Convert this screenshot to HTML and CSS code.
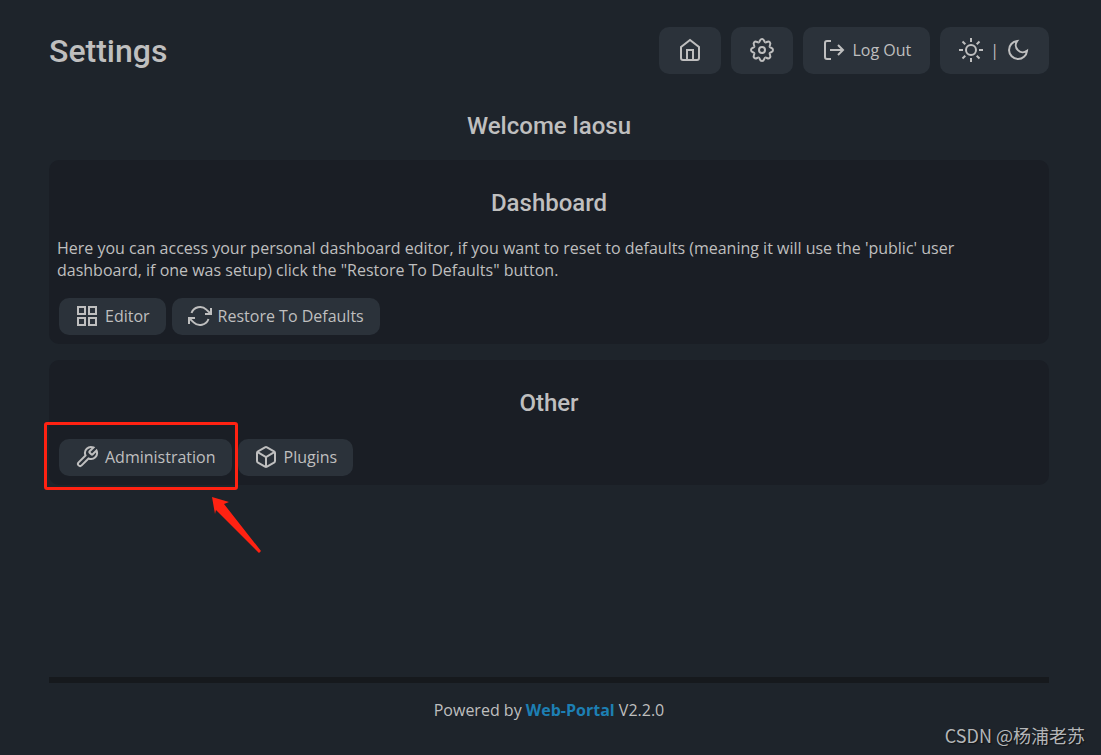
FILE: index.html
```html
<!DOCTYPE html>
<html lang="en">
<head>
<meta charset="utf-8">
<title>Settings</title>
<link rel="stylesheet" href="styles.css">
</head>
<body>
<div class="page">
  <header class="header">
    <h1 class="title">Settings</h1>
    <nav class="nav">
      <button class="nav-button" aria-label="Home">
        <svg class="icon" viewBox="0 0 24 24"><path d="M3 9l9-7 9 7v11a2 2 0 0 1-2 2H5a2 2 0 0 1-2-2z"/><path d="M9 22V12h6v10"/></svg>
      </button>
      <button class="nav-button" aria-label="Settings">
        <svg class="icon" viewBox="0 0 24 24">
          <circle cx="12" cy="12" r="3"/>
          <path id="tooth" d="M19.670 8.820C20.250 10.200 23 9.400 23 12S20.250 13.800 19.670 15.180"/>
          <use href="#tooth" transform="rotate(45 12 12)"/>
          <use href="#tooth" transform="rotate(90 12 12)"/>
          <use href="#tooth" transform="rotate(135 12 12)"/>
          <use href="#tooth" transform="rotate(180 12 12)"/>
          <use href="#tooth" transform="rotate(225 12 12)"/>
          <use href="#tooth" transform="rotate(270 12 12)"/>
          <use href="#tooth" transform="rotate(315 12 12)"/>
        </svg>
      </button>
      <button class="nav-button">
        <svg class="icon" viewBox="0 0 24 24"><path d="M9 3H5a2 2 0 0 0-2 2v14a2 2 0 0 0 2 2h4"/><path d="M8 12h13M16 7l5 5-5 5"/></svg>
        <span>Log Out</span>
      </button>
      <button class="nav-button theme" aria-label="Switch theme">
        <svg class="icon" viewBox="0 0 24 24"><circle cx="12" cy="12" r="5"/><path d="M12 0v4M12 20v4M0 12h4M20 12h4M3.500 3.500l2.800 2.800M17.700 17.700l2.800 2.800M3.500 20.500l2.800-2.800M17.700 6.300l2.800-2.800"/></svg>
        <span>|</span>
        <svg class="icon" viewBox="0 0 24 24"><path d="M21 12.800A9 9 0 1 1 11.200 3 7 7 0 0 0 21 12.800z"/></svg>
      </button>
    </nav>
  </header>
  <main class="main">
    <h2 class="heading">Welcome laosu</h2>
    <section class="panel">
      <h2 class="heading">Dashboard</h2>
      <p class="text">Here you can access your personal dashboard editor, if you want to reset to defaults (meaning it will use the 'public' user dashboard, if one was setup) click the "Restore To Defaults" button.</p>
      <div class="actions">
        <button class="action">
          <svg class="icon" viewBox="0 0 24 24"><path d="M3 3h7v7H3zM14 3h7v7h-7zM14 14h7v7h-7zM3 14h7v7H3z"/></svg>
          <span>Editor</span>
        </button>
        <button class="action">
          <svg class="icon" viewBox="0 0 24 24"><path d="M23 4v6h-6M1 20v-6h6"/><path d="M3.510 9a9 9 0 0 1 14.850-3.360L23 10M1 14l4.640 4.360A9 9 0 0 0 20.490 15"/></svg>
          <span>Restore To Defaults</span>
        </button>
      </div>
    </section>
    <section class="panel">
      <h2 class="heading">Other</h2>
      <div class="actions">
        <div class="marked">
          <button class="action">
            <svg class="icon" viewBox="0 0 24 24"><path d="M14.700 6.300a1 1 0 0 0 0 1.400l1.600 1.600a1 1 0 0 0 1.400 0l3.770-3.770a6 6 0 0 1-7.940 7.940l-6.910 6.910a2.120 2.120 0 0 1-3-3l6.910-6.910a6 6 0 0 1 7.940-7.940l-3.760 3.760z"/></svg>
            <span>Administration</span>
          </button>
          <div class="mark"></div>
          <svg class="arrow" viewBox="0 0 50 58"><path d="M1 1L18 6 13 8 50 55 48 57 5 14 4 18z"/></svg>
        </div>
        <button class="action">
          <svg class="icon" viewBox="0 0 24 24"><path d="M21 16V8a2 2 0 0 0-1-1.730l-7-4a2 2 0 0 0-2 0l-7 4A2 2 0 0 0 3 8v8a2 2 0 0 0 1 1.730l7 4a2 2 0 0 0 2 0l7-4A2 2 0 0 0 21 16z"/><path d="M3.270 6.960L12 12.010l8.730-5.050M12 22.080V12"/></svg>
          <span>Plugins</span>
        </button>
      </div>
    </section>
  </main>
  <footer class="footer">Powered by <a class="link" href="#">Web-Portal</a> V2.2.0</footer>
</div>
<div class="watermark">CSDN @杨浦老苏</div>
</body>
</html>
```

FILE: styles.css
```css
* { box-sizing: border-box; }
body {
  margin: 0;
  background: #1e242b;
  color: #bfbfbf;
  font: 16px/22px "Open Sans", "Noto Sans", sans-serif;
}
.page {
  display: flex;
  flex-direction: column;
  min-height: 100vh;
  padding: 27px 52px 34px 49px;
}
.header {
  display: flex;
  justify-content: space-between;
  align-items: center;
}
.title, .heading {
  margin: 0;
  font-family: Roboto, sans-serif;
  font-weight: 500;
}
.title { font-size: 32px; line-height: 46px; }
.heading { font-size: 24px; line-height: 30px; text-align: center; }
.nav { display: flex; gap: 10px; }
.nav-button, .action {
  display: flex;
  align-items: center;
  border: 0;
  border-radius: 10px;
  background: #2b323a;
  color: inherit;
  font: inherit;
  cursor: pointer;
}
.nav-button { gap: 6px; padding: 11px 19px 12px; }
.theme { gap: 7px; }
.icon {
  width: 24px;
  height: 24px;
  flex: none;
  fill: none;
  stroke: currentColor;
  stroke-width: 2;
}
.main {
  display: flex;
  flex-direction: column;
  gap: 16px;
  padding-top: 37px;
}
.main > .heading { margin-bottom: 3px; }
.panel {
  padding: 28px 8px 9px;
  border-radius: 10px;
  background: #1a1e25;
}
.text { margin: 19px 0 17px; }
.actions { display: flex; gap: 6px; padding: 0 2px; }
.heading + .actions { margin-top: 21px; }
.action { gap: 6px; padding: 6px 16px 7px; }
.marked { position: relative; }
.mark {
  position: absolute;
  inset: -17px -6px -14px -15px;
  border: 3px solid #ff2212;
  border-radius: 3px;
  pointer-events: none;
}
.arrow {
  position: absolute;
  left: 152px;
  top: 57px;
  width: 50px;
  height: 58px;
  fill: #ff2212;
}
.footer {
  margin-top: auto;
  padding-top: 16px;
  border-top: 6px solid #16191d;
  text-align: center;
}
.link { color: #1d7fb3; font-weight: 700; text-decoration: none; }
.watermark {
  position: absolute;
  right: 16px;
  bottom: 8px;
  font: 18px/24px "Noto Sans CJK SC", sans-serif;
  color: #b4b6b8;
  text-shadow: 1px 1px 1px #101316;
}
```
